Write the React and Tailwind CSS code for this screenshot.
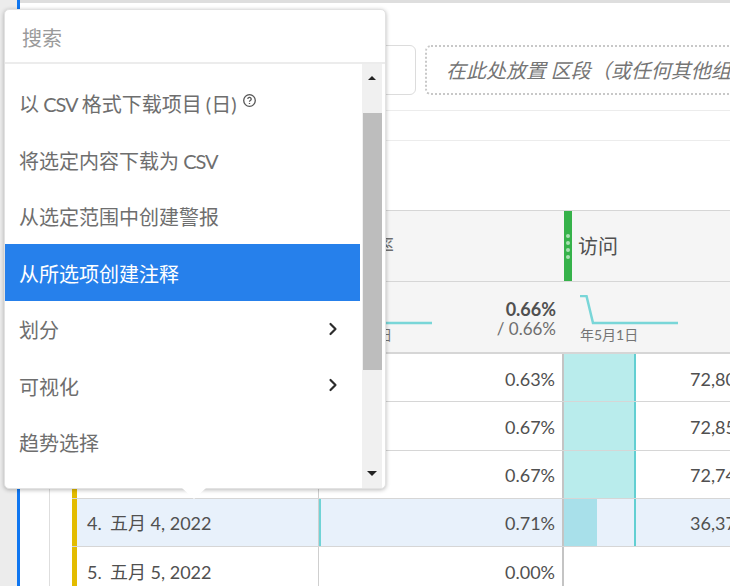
import { ChevronRight } from 'lucide-react';

const FONT = "font-['Lato','Noto_Sans_CJK_SC',sans-serif]";

const Csv = () => <span className="tracking-[-1px]">CSV</span>;

const MENU_ITEMS = [
  { id: 'csv-day', label: <>以 <Csv /> 格式下载项目 (日)</>, help: true },
  { id: 'csv-selected', label: <>将选定内容下载为 <Csv /></> },
  { id: 'alert', label: '从选定范围中创建警报' },
  { id: 'annotation', label: '从所选项创建注释', active: true },
  { id: 'breakdown', label: '划分', arrow: true },
  { id: 'visualize', label: '可视化', arrow: true },
  { id: 'trend', label: '趋势选择' },
];

const ROWS = [
  { num: '1.', name: '五月 1, 2022', pct: '0.63%', visits: '72,80', bar: 'full' },
  { num: '2.', name: '五月 2, 2022', pct: '0.67%', visits: '72,85', bar: 'full' },
  { num: '3.', name: '五月 3, 2022', pct: '0.67%', visits: '72,74', bar: 'full' },
  { num: '4.', name: '五月 4, 2022', pct: '0.71%', visits: '36,37', bar: 'half', selected: true },
  { num: '5.', name: '五月 5, 2022', pct: '0.00%', visits: '', bar: 'none' },
];

function Row({ row, last }) {
  return (
    <div className={`flex h-[48.25px] text-[18px] text-[#505050] ${last ? '' : 'border-b border-[#d6d6d6]'} ${row.selected ? 'bg-[#e8f1fb]' : 'bg-white'}`}>
      <div className="w-[246px] shrink-0 border-l-[5px] border-[#e3bc00] flex items-center pl-2.5 pt-[3px] whitespace-nowrap">
        <span className="w-[23px] shrink-0">{row.num}</span>
        <span>{row.name}</span>
      </div>
      <div className="w-[244px] shrink-0 border-l border-[#cfcfcf] flex items-center justify-end pr-[7px] pt-[3px] relative">
        {row.bar === 'half' && <span className="absolute left-0 inset-y-0 w-0.5 bg-[#6fd3d6]" />}
        {row.pct}
      </div>
      <div className="flex-1 border-l-2 border-[#c4c4c4] flex">
        <div className={`w-[72px] shrink-0 border-r-2 ${row.bar === 'none' ? 'border-transparent' : 'border-[#62cfd2]'}`}>
          {row.bar === 'full' && <div className="h-full bg-[#b9ecec]" />}
          {row.bar === 'half' && <div className="h-full w-[33px] bg-[#a8e0ea]" />}
        </div>
        <div className="flex-1 flex items-center pl-[54px] pt-[3px] overflow-hidden whitespace-nowrap">{row.visits}</div>
      </div>
    </div>
  );
}

function Sparkline() {
  return (
    <div className="pl-4 pt-[13px]">
      <svg width="99" height="30" viewBox="0 0 99 30" className="block" fill="none">
        <path d="M0 1h6.5L13 28H98" stroke="#79d6d8" strokeWidth="2.5" />
      </svg>
      <div className="text-[14px] text-[#747474] leading-4 mt-0.5 whitespace-nowrap">年5月1日</div>
    </div>
  );
}

function Table() {
  return (
    <div>
      <div className="flex h-[72px] bg-[#f5f5f5] border-y border-[#d6d6d6] text-[20px] text-[#505050]">
        <div className="w-[246px] shrink-0" />
        <div className="w-[246px] shrink-0 flex items-center pl-4 text-[#6e6e6e]">跳出率</div>
        <div className="w-2 shrink-0 bg-[#36b24a] flex flex-col items-center justify-center gap-[3px]">
          {[0, 1, 2, 3].map(i => <span key={i} className="w-1 h-1 rounded-full bg-[#a9e0b2]" />)}
        </div>
        <div className="flex items-center pl-1.5">访问</div>
      </div>
      <div className="flex h-[72px] bg-[#f5f5f5] border-b-2 border-[#d6d6d6]">
        <div className="w-[246px] shrink-0" />
        <div className="w-[246px] shrink-0 flex justify-between">
          <Sparkline />
          <div className="flex flex-col items-end pt-[17px] pr-2 text-[#505050] leading-[20px]">
            <span className="text-[18px] font-bold">0.66%</span>
            <span className="text-[17px] text-[#6e6e6e]">/ 0.66%</span>
          </div>
        </div>
        <div className="flex-1"><Sparkline /></div>
      </div>
      {ROWS.map((row, i) => <Row key={row.num} row={row} last={i === ROWS.length - 1} />)}
    </div>
  );
}

function Menu() {
  return (
    <div className="absolute left-1 top-[9px] w-[382px] h-[480px] bg-white rounded-[5px] border border-[#e2e2e2] shadow-[0_1px_4px_rgba(0,0,0,0.28)] flex flex-col">
      <div className="h-[54px] shrink-0 flex items-center pl-[17px] pt-1 text-[20px] text-[#9a9a9a] border-b-2 border-[#ececec]">搜索</div>
      <div className="flex flex-1 min-h-0">
        <ul className="w-[355px] shrink-0 pt-[10.5px]">
          {MENU_ITEMS.map(item => (
            <li
              key={item.id}
              className={`h-[56.5px] flex items-center pl-[14px] pr-[17px] text-[20px] ${item.active ? 'bg-[#2680eb] text-white' : 'text-[#6e6e6e]'}`}
            >
              <span className="pt-[3px] [word-spacing:-1px]">{item.label}</span>
              {item.help && (
                <svg width="15" height="15" viewBox="0 0 15 15" className="ml-[5px] -mt-1" fill="none" stroke="#555" strokeWidth="1.3">
                  <circle cx="7.5" cy="7.5" r="5.8" />
                  <path d="M5.8 6a1.7 1.7 0 1 1 2.5 1.5c-.5.3-.8.6-.8 1.2M7.5 10v1" />
                </svg>
              )}
              {item.arrow && <ChevronRight size={20} strokeWidth={2.6} className="ml-auto text-[#2c2c2c]" />}
            </li>
          ))}
        </ul>
        <div className="ml-0.5 w-5 bg-[#f0f0f0] flex flex-col items-center relative">
          <span className="mt-3 w-0 h-0 border-x-4 border-b-4 border-x-transparent border-b-[#222]" />
          <div className="mt-[33px] w-[19px] h-[257px] bg-[#bdbdbd]" />
          <span className="mt-[101px] w-0 h-0 border-x-[5px] border-t-[5px] border-x-transparent border-t-[#222]" />
        </div>
      </div>
      {/* pointer under the menu */}
      <span className="absolute left-[177px] -bottom-[11px] w-0 h-0 border-x-[12px] border-t-[11px] border-x-transparent border-t-white" />
    </div>
  );
}

export default function App() {
  return (
    <div className={`relative w-[730px] h-[586px] overflow-hidden bg-white flex ${FONT}`}>
      <div className="w-[17px] shrink-0 bg-[#ececec]" />
      <div className="w-[3px] shrink-0 bg-[#0f76f0]" />
      <div className="flex-1 min-w-0">
        <div className="h-[3px] bg-[#dedede]" />
        <div className="h-[108px] border-b border-[#ececec] flex items-start pt-[42px] pl-[96px] gap-[9px]">
          <div className="w-[300px] h-[50px] shrink-0 border border-[#dcdcdc] rounded-[6px]" />
          <div className="flex-1 h-[50px] border-2 border-dotted border-r-0 border-[#c8c8c8] rounded-l-[6px] flex items-center pl-[19px] overflow-hidden whitespace-nowrap italic text-[20px] text-[#757575]">
            在此处放置 区段（或任何其他组件）
          </div>
        </div>
        <div className="h-[30px] border-b border-[#ececec]" />
        <div className="flex h-[376px] mt-[69px]">
          <div className="w-[30px] shrink-0 border-r border-[#dedede]" />
          <div className="w-[22px] shrink-0" />
          <div className="flex-1 min-w-0 overflow-hidden"><Table /></div>
        </div>
      </div>
      <Menu />
    </div>
  );
}
